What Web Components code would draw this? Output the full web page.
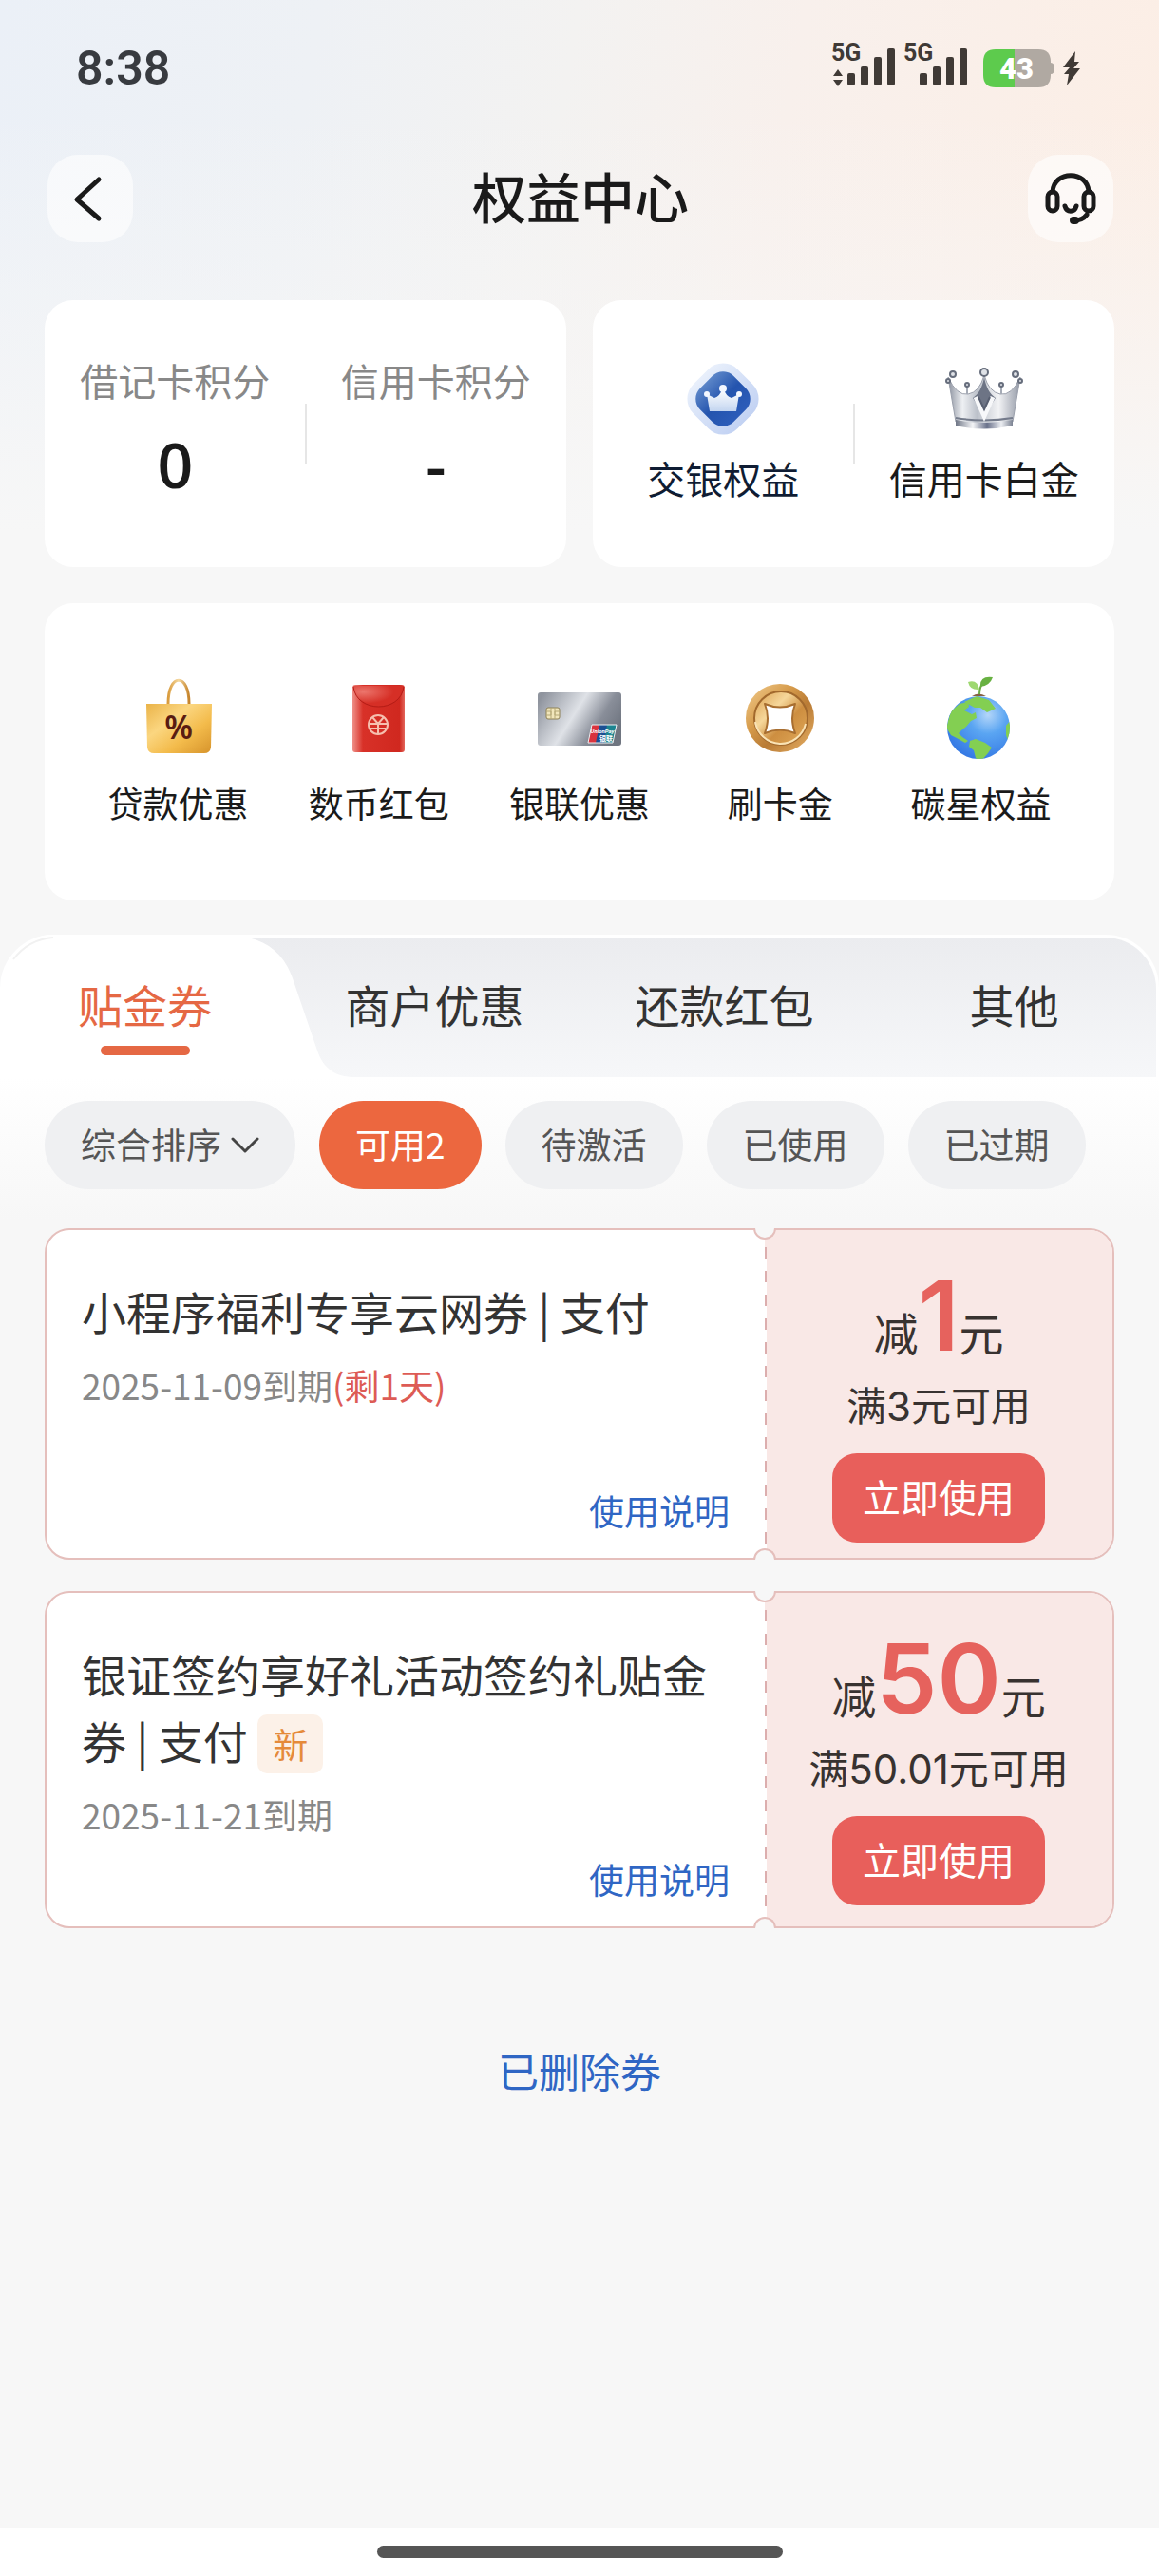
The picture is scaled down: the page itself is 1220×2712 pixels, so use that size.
<!DOCTYPE html>
<html lang="zh-CN">
<head>
<meta charset="utf-8">
<meta name="viewport" content="width=device-width, initial-scale=1">
<title>权益中心</title>
<style>
	html {
		background:#f7f7f7;
	}
	body {
		margin:0;
		font-family:"Noto Sans CJK SC", "Noto Sans", sans-serif;
		color:#1a1a1a;
	}
</style>
</head>
<body>
<rc-page>
	<rc-status-bar slot="top" time="8:38" battery="43"></rc-status-bar>
	<rc-header slot="top">权益中心</rc-header>

	<rc-card>
		<rc-stat label="借记卡积分">0</rc-stat>
		<rc-stat label="信用卡积分">-</rc-stat>
	</rc-card>
	<rc-card>
		<rc-entry icon="diamond" size="large" style="--rc-entry-color:#0f1c33">交银权益</rc-entry>
		<rc-entry icon="crown" size="large">信用卡白金</rc-entry>
	</rc-card>
	<rc-card wide>
		<rc-entry icon="bag">贷款优惠</rc-entry>
		<rc-entry icon="envelope">数币红包</rc-entry>
		<rc-entry icon="card">银联优惠</rc-entry>
		<rc-entry icon="coin">刷卡金</rc-entry>
		<rc-entry icon="globe">碳星权益</rc-entry>
	</rc-card>

	<rc-panel slot="panel">
		<rc-tab slot="tabs" active>贴金券</rc-tab>
		<rc-tab slot="tabs">商户优惠</rc-tab>
		<rc-tab slot="tabs">还款红包</rc-tab>
		<rc-tab slot="tabs">其他</rc-tab>

		<rc-sort slot="filters" label="综合排序"></rc-sort>
		<rc-chip slot="filters" active>可用2</rc-chip>
		<rc-chip slot="filters">待激活</rc-chip>
		<rc-chip slot="filters">已使用</rc-chip>
		<rc-chip slot="filters">已过期</rc-chip>

		<rc-coupon amount="1" condition="满3元可用">
			小程序福利专享云网券 | 支付
			<span slot="date">2025-11-09到期</span>
			<span slot="left">(剩1天)</span>
		</rc-coupon>
		<rc-coupon amount="50" condition="满50.01元可用" tag="新">
			银证签约享好礼活动签约礼贴金券 | 支付
			<span slot="date">2025-11-21到期</span>
		</rc-coupon>

		<rc-link slot="footer">已删除券</rc-link>
	</rc-panel>
</rc-page>

<script>
const icons = {
	back: {
		box: '0 0 90 92',
		svg: `<path d="M54 26 31 47 54 67" fill="none" stroke="#1a1a1a" stroke-width="5" stroke-linecap="round" stroke-linejoin="round"/>`
	},
	service: {
		box: '0 0 90 92',
		svg: `<g fill="none" stroke="#1a1a1a" stroke-width="5" stroke-linecap="round">
			<path d="M26 39C27 16 63 16 64 39"/>
			<rect x="21" y="39" width="10" height="20" rx="5"/>
			<rect x="59" y="39" width="10" height="20" rx="5"/>
			<path d="M39 54C41 61 49 61 51 54"/>
			<path d="M62 63C59 67 55 69 49 69"/>
			<path d="M48 69h2" stroke-width="8"/>
		</g>`
	},
	diamond: {
		box: '0 0 76 76',
		svg: `<defs>
			<linearGradient id="a"><stop offset="0" stop-color="#e8effb"/><stop offset="1" stop-color="#c2d2f3"/></linearGradient>
			<linearGradient id="b" x1="0" y1=".5" x2="1" y2=".5"><stop offset="0" stop-color="#5c86c8"/><stop offset=".5" stop-color="#2454ae"/><stop offset="1" stop-color="#2c5cb9"/></linearGradient>
			<linearGradient id="c" x1="0" y1="0" x2="0" y2="1"><stop offset="0" stop-color="#fff"/><stop offset="1" stop-color="#c3d5f0"/></linearGradient>
		</defs>
		<rect x="5" y="5" width="66" height="66" rx="22" transform="rotate(45 38 38)" fill="url(#a)"/>
		<rect x="13" y="13" width="50" height="50" rx="16" transform="rotate(45 38 38)" fill="url(#b)"/>
		<path d="M24 51 21 33 29 37Q35 35 37 28H39Q41 35 47 37L55 33 52 51Z" fill="url(#c)"/>
		<g fill="#f3f7ff"><circle cx="38" cy="27" r="4"/><circle cx="21" cy="33" r="3"/><circle cx="55" cy="33" r="3"/></g>`
	},
	crown: {
		box: '0 0 84 76',
		svg: `<defs>
			<linearGradient id="a"><stop offset="0" stop-color="#8b919e"/><stop offset=".2" stop-color="#eef0f3"/><stop offset=".4" stop-color="#bcc1ca"/><stop offset=".7" stop-color="#f2f3f5"/><stop offset="1" stop-color="#9399a6"/></linearGradient>
			<linearGradient id="b"><stop offset="0" stop-color="#6f7686"/><stop offset=".3" stop-color="#f4f5f7"/><stop offset=".55" stop-color="#69718a"/><stop offset=".8" stop-color="#eceef2"/><stop offset="1" stop-color="#7b8292"/></linearGradient>
		</defs>
		<path d="M12 62 4 15Q13 35 25 33 37 31 42 13 47 31 59 33 71 35 80 15L72 62Q42 69 12 62Z" fill="url(#a)" stroke="#9a9fab"/>
		<path d="M12 60Q42 66 72 60V66Q42 73 12 66Z" fill="url(#b)"/>
		<path d="M12 58Q42 63 72 58" fill="none" stroke="#747b8b" stroke-width="2"/>
		<path d="M42 15C40 26 36 33 30 37L42 56 54 37C48 33 44 26 42 15Z" fill="#6d7485"/>
		<path d="M33 36 42 56 51 36" fill="none" stroke="#f7f8fa" stroke-width="5"/>
		<path d="M36 36 42 49 48 36" fill="none" stroke="#575e70" stroke-width="2"/>
		<path d="M24 24v9M60 24v9" stroke="#a5abb6" stroke-width="2"/>
		<g fill="#dfe2e7" stroke="#666d7c" stroke-width="2"><circle cx="42" cy="10" r="4"/><circle cx="9" cy="12" r="3"/><circle cx="75" cy="12" r="3"/><circle cx="4" cy="19" r="2"/><circle cx="80" cy="19" r="2"/><circle cx="24" cy="23" r="2"/><circle cx="60" cy="23" r="2"/></g>`
	},
	bag: {
		box: '0 0 88 88',
		svg: `<defs>
			<linearGradient id="a" x1="0" y1="0" x2="1" y2="1"><stop offset="0" stop-color="#eab348"/><stop offset=".35" stop-color="#fbd680"/><stop offset=".65" stop-color="#f3bb4b"/><stop offset="1" stop-color="#d6932b"/></linearGradient>
			<linearGradient id="b"><stop offset="0" stop-color="#d99b3c"/><stop offset=".5" stop-color="#f5d9a0"/><stop offset="1" stop-color="#c5832a"/></linearGradient>
		</defs>
		<path d="M33 29C33-4 55-4 55 29" fill="none" stroke="url(#b)" stroke-width="3"/>
		<path d="M10 29H79L78 75Q77 81 71 81H18Q12 81 11 75Z" fill="url(#a)"/>
		<text x="44" y="66" font-family="Noto Sans, sans-serif" font-size="34" font-weight="600" text-anchor="middle" fill="#5a1c12">%</text>`
	},
	envelope: {
		box: '0 0 88 88',
		svg: `<defs>
			<linearGradient id="a"><stop offset="0" stop-color="#ef9088"/><stop offset=".2" stop-color="#d83128"/><stop offset=".9" stop-color="#d0281f"/><stop offset="1" stop-color="#e3665c"/></linearGradient>
			<radialGradient id="b" cx=".2" cy=".3" r=".6"><stop offset="0" stop-color="#ec766d"/><stop offset="1" stop-color="#d62f26"/></radialGradient>
		</defs>
		<rect x="16" y="9" width="55" height="71" rx="3" fill="url(#a)"/>
		<path d="M17 10H70C69 38 20 38 17 10Z" fill="url(#b)"/>
		<path d="M17 11C20 39 67 39 70 11" fill="none" stroke="#b41c16"/>
		<g fill="none" stroke="#f6bfae" stroke-width="2"><circle cx="43" cy="51" r="10"/><path d="M37 43 43 50 49 43M43 50V60M34 50H52M35 55H51"/></g>`
	},
	card: {
		box: '0 0 88 88',
		svg: `<defs>
			<linearGradient id="a" x1="0" y1=".2" x2="1" y2=".6"><stop offset="0" stop-color="#8f949e"/><stop offset=".45" stop-color="#dfe2e7"/><stop offset=".75" stop-color="#898e99"/><stop offset="1" stop-color="#6f7580"/></linearGradient>
		</defs>
		<rect y="17" width="88" height="56" rx="3" fill="url(#a)"/>
		<rect x="9" y="33" width="14" height="12" rx="2" fill="#f1e6bb" stroke="#8d8055"/>
		<path d="M9 37h5v4H9M23 37h-5v4h5M14 33v12M18 33v12" fill="none" stroke="#b5a877"/>
		<path d="M57 51H67L63 70H53Z" fill="#d9333d"/>
		<path d="M65 51H75L71 70H61Z" fill="#1b4f93"/>
		<path d="M73 51H83L79 70H70Z" fill="#1d8490"/>
		<path d="M57 51H83L79 70H53Z" fill="none" stroke="#eef1f4"/>
		<text x="68" y="60" font-family="Roboto, sans-serif" font-size="6" font-weight="700" font-style="italic" text-anchor="middle" fill="#fff">UnionPay</text>
		<text x="72" y="68" font-family="Noto Sans CJK SC, sans-serif" font-size="7" font-weight="700" text-anchor="middle" fill="#fff">银联</text>`
	},
	coin: {
		box: '0 0 88 88',
		svg: `<defs>
			<linearGradient id="a" x1="0" y1="0" x2="1" y2="1"><stop offset="0" stop-color="#f2cf92"/><stop offset=".35" stop-color="#d79c4c"/><stop offset=".6" stop-color="#b97b35"/><stop offset="1" stop-color="#eab469"/></linearGradient>
			<linearGradient id="b" x1="0" y1="0" x2="1" y2="1"><stop offset="0" stop-color="#d99c4b"/><stop offset=".35" stop-color="#f6d79a"/><stop offset=".6" stop-color="#cd8e40"/><stop offset="1" stop-color="#e2aa5b"/></linearGradient>
		</defs>
		<circle cx="44" cy="44" r="36" fill="url(#a)"/>
		<circle cx="45" cy="44" r="28" fill="url(#b)" stroke="#a2692d" stroke-width="2"/>
		<path d="M18 48A27 27 0 0 0 71 50" fill="none" stroke="#fae3b5" stroke-width="2"/>
		<path d="M28 29Q44 36 60 29 54 44 60 60 44 53 28 60 34 44 28 29Z" fill="#fff" stroke="#a86e30" stroke-width="2" stroke-linejoin="round"/>`
	},
	globe: {
		box: '0 0 88 88',
		svg: `<defs>
			<radialGradient id="a" cx=".65" cy=".3" r=".75"><stop offset="0" stop-color="#b4d6f9"/><stop offset=".4" stop-color="#5aa5f2"/><stop offset="1" stop-color="#3478e4"/></radialGradient>
			<clipPath id="c"><circle cx="42" cy="54" r="33"/></clipPath>
		</defs>
		<circle cx="42" cy="54" r="33" fill="url(#a)"/>
		<g clip-path="url(#c)" fill="#83cf52">
			<path d="M8 54 13 37 22 29 31 27 32 32 27 36 35 40 39 38 40 44 34 47 29 53 24 57 21 60 25 64 31 68 28 70 19 65 13 62Z"/>
			<path d="M33 68 39 66 49 70 56 75 52 81 44 90 39 86 37 78 32 74Z"/>
			<path d="M27 27 40 21 53 25 60 34 51 38 44 33 38 33Z"/>
			<path d="M76 46 71 52 71 62 75 72Z"/>
		</g>
		<path d="M35 21Q42 16 50 21Z" fill="#876044"/>
		<path d="M43 19Q43 11 47 7" fill="none" stroke="#6cab45" stroke-width="2"/>
		<path d="M44 11Q43-1 57 1 54 10 44 11Z" fill="#68b142"/>
		<path d="M43 14Q33 15 31 6 41 3 43 14Z" fill="#9ed870"/>`
	}
};

const drawIcon = name => `<svg viewBox="${icons[name].box}" aria-hidden="true">${icons[name].svg}</svg>`;

// base element, attaches the markup returned by the template getter
class RcElement extends HTMLElement {
	connectedCallback() {
		const template = document.createElement('template');
		template.innerHTML = this.template;
		this.attachShadow({mode: 'open'}).appendChild(template.content.cloneNode(true));
	}
}

customElements.define('rc-page', class extends RcElement {
	get template() {
		return `
		<style>
		:host {
			display:flex;
			flex-direction:column;
			min-height:100vh;
			background:
				linear-gradient(180deg, rgba(247,247,247,0) 120px, #f7f7f7 560px),
				linear-gradient(100deg, #ebf0f7 0%, #eef1f5 20%, #f3f2f1 36%, #f8f0ec 50%, #fceee5 75%, #fdece1 100%);
		}
		main {
			flex:1;
		}
		section {
			display:grid;
			grid-template-columns:1fr 1fr;
			gap:38px 28px;
			padding:61px 47px 36px;
		}
		footer {
			display:flex;
			justify-content:center;
			padding:19px 0;
			background:#fff;
		}
		footer i {
			width:35%;
			height:13px;
			border-radius:7px;
			background:#555;
		}
		</style>
		<slot name="top"></slot>
		<main>
			<section><slot></slot></section>
			<slot name="panel"></slot>
		</main>
		<footer><i></i></footer>`;
	}
});

customElements.define('rc-status-bar', class extends RcElement {
	get template() {
		const bars = `
			<rect x="17" y="31" width="8" height="13" rx="2"/>
			<rect x="31" y="24" width="8" height="20" rx="2"/>
			<rect x="45" y="14" width="8" height="30" rx="2"/>
			<rect x="59" y="5" width="8" height="39" rx="2"/>
			<text x="0" y="18" font-size="25" font-weight="700">5G</text>`;
		return `
		<style>
		:host {
			display:flex;
			align-items:center;
			height:144px;
			padding:0 83px 0 80px;
			font-family:Roboto, sans-serif;
			color:#383b40;
		}
		time {
			flex:1;
			font-size:50px;
			font-weight:600;
			line-height:60px;
		}
		div {
			display:flex;
			align-items:center;
			gap:8px;
		}
		svg {
			display:block;
			fill:#403a36;
		}
		.battery {
			margin-left:8px;
		}
		</style>
		<time>${this.getAttribute('time')}</time>
		<div>
			<svg width="68" height="68" viewBox="0 -8 68 68">${bars}<path d="M7 27 12 34H2ZM7 45 12 38H2Z"/></svg>
			<svg width="68" height="68" viewBox="0 -8 68 68">${bars}</svg>
			<svg class="battery" width="76" height="40" viewBox="0 0 76 40">
				<path d="M33 0H58Q71 0 71 13V27Q71 40 58 40H33Z" fill="#b0a9a2"/>
				<path d="M33 0H13Q0 0 0 13V27Q0 40 13 40H33Z" fill="#5dcb4d"/>
				<path d="M71 14Q75 14 75 20T71 26Z" fill="#b0a9a2"/>
				<text x="35" y="31" font-size="31" font-weight="900" text-anchor="middle" fill="#fff">${this.getAttribute('battery')}</text>
			</svg>
			<svg width="18" height="38" viewBox="0 0 18 38"><path d="M13 1 0 18H7L1 25H6L4 37 18 19H11L17 12H12Z"/></svg>
		</div>`;
	}
});

customElements.define('rc-header', class extends RcElement {
	get template() {
		return `
		<style>
		:host {
			display:grid;
			grid-template-columns:90px 1fr 90px;
			align-items:center;
			padding:19px 48px 0 50px;
		}
		h1 {
			margin:0;
			padding-bottom:8px;
			font-size:57px;
			font-weight:500;
			line-height:84px;
			text-align:center;
		}
		button {
			height:92px;
			padding:0;
			border:0;
			border-radius:32px;
			background:rgba(255,255,255,.6);
		}
		svg {
			display:block;
		}
		</style>
		<button aria-label="返回">${drawIcon('back')}</button>
		<h1><slot></slot></h1>
		<button aria-label="客服">${drawIcon('service')}</button>`;
	}
});

customElements.define('rc-card', class extends RcElement {
	get template() {
		return `
		<style>
		:host {
			display:grid;
			grid-auto-flow:column;
			grid-auto-columns:minmax(0, 1fr);
			border-radius:30px;
			background:#fff;
		}
		:host([wide]) {
			grid-column:1 / -1;
			padding:0 35px;
		}
		/* one divider in the middle, laid over both cells */
		:host(:not([wide]))::after {
			content:'';
			grid-area:1 / 1 / 2 / 3;
			place-self:center;
			width:2px;
			height:63px;
			background:#e6e6e6;
		}
		:host(:not([wide])) ::slotted(:first-child) {
			grid-area:1 / 1;
		}
		:host(:not([wide])) ::slotted(:last-child) {
			grid-area:1 / 2;
		}
		</style>
		<slot></slot>`;
	}
});

customElements.define('rc-stat', class extends RcElement {
	get template() {
		return `
		<style>
		:host {
			display:flex;
			flex-direction:column;
			align-items:center;
			gap:20px;
			padding:56px 0 69px;
		}
		span {
			font-size:40px;
			line-height:56px;
			color:#888;
		}
		strong {
			font-family:"Open Sans", sans-serif;
			font-size:66px;
			font-weight:600;
			line-height:80px;
		}
		</style>
		<span>${this.getAttribute('label')}</span>
		<strong><slot></slot></strong>`;
	}
});

customElements.define('rc-entry', class extends RcElement {
	get template() {
		return `
		<style>
		:host {
			display:block;
		}
		a {
			display:flex;
			flex-direction:column;
			align-items:center;
			gap:19px;
			padding:77px 0;
			font-size:37px;
			line-height:52px;
			white-space:nowrap;
			text-decoration:none;
			color:var(--rc-entry-color, #1a1a1a);
		}
		svg {
			display:block;
			height:88px;
		}
		:host([size=large]) a {
			gap:17px;
			padding:66px 0;
			font-size:40px;
			line-height:56px;
		}
		:host([size=large]) svg {
			height:76px;
		}
		</style>
		<a href="#">${drawIcon(this.getAttribute('icon'))}<slot></slot></a>`;
	}
});

customElements.define('rc-panel', class extends RcElement {
	get template() {
		return `
		<style>
		:host {
			display:block;
			overflow:hidden;
			border-radius:56px 56px 0 0;
			background:linear-gradient(180deg, #fff 150px, #f7f7f7 300px);
		}
		.head {
			display:grid;
		}
		.head > * {
			grid-area:1 / 1;
		}
		.strip {
			margin:3px 3px 0 0;
			border-radius:0 54px 0 0;
			background:linear-gradient(180deg, #ebecef, #f6f7f9);
		}
		.shape {
			display:block;
			width:376px;
			height:150px;
		}
		.tabs {
			display:grid;
			grid-template-columns:repeat(4, 1fr);
		}
		.filters {
			display:flex;
			gap:25px;
			padding:25px 47px 41px;
		}
		.coupons {
			display:flex;
			flex-direction:column;
			gap:33px;
			padding:0 47px;
		}
		</style>
		<div class="head">
			<div class="strip"></div>
			<svg class="shape" viewBox="0 0 376 150" aria-hidden="true">
				<path d="M0 0H240C275 2 297 15 308 46L334 122C340 140 352 150 374 150H0Z" fill="#fff"/>
				<path d="M14 26Q30 5 56 3" fill="none" stroke="#f1f1f1" stroke-width="2"/>
			</svg>
			<div class="tabs" role="tablist"><slot name="tabs"></slot></div>
		</div>
		<div class="filters"><slot name="filters"></slot></div>
		<div class="coupons"><slot></slot></div>
		<slot name="footer"></slot>`;
	}
});

customElements.define('rc-tab', class extends RcElement {
	get template() {
		return `
		<style>
		:host {
			display:grid;
		}
		button {
			display:flex;
			flex-direction:column;
			align-items:center;
			gap:14px;
			padding:43px 0 23px;
			border:0;
			background:none;
			font:inherit;
			font-size:47px;
			line-height:60px;
			color:#333;
		}
		i {
			width:94px;
			height:10px;
			border-radius:5px;
		}
		:host([active]) button {
			color:#e56844;
		}
		:host([active]) i {
			background:#e56844;
		}
		</style>
		<button role="tab" aria-selected="${this.hasAttribute('active')}"><slot></slot><i></i></button>`;
	}
});

customElements.define('rc-chip', class extends RcElement {
	get template() {
		return `
		<style>
		:host {
			display:block;
		}
		button {
			height:93px;
			padding:0 38px 4px;
			border:0;
			border-radius:47px;
			background:#eff0f2;
			font:inherit;
			font-size:37px;
			white-space:nowrap;
			color:#555;
		}
		:host([active]) button {
			background:#ec673f;
			color:#fff;
		}
		</style>
		<button><slot></slot></button>`;
	}
});

customElements.define('rc-sort', class extends RcElement {
	get template() {
		return `
		<style>
		:host {
			display:grid;
			align-items:center;
			justify-items:end;
			height:93px;
			border-radius:47px;
			background:#eff0f2;
		}
		select, svg {
			grid-area:1 / 1;
		}
		select {
			appearance:none;
			height:93px;
			padding:0 78px 4px 38px;
			border:0;
			background:none;
			font:inherit;
			font-size:37px;
			color:#555;
		}
		svg {
			margin-right:38px;
			pointer-events:none;
		}
		</style>
		<select aria-label="排序"><option>${this.getAttribute('label')}</option></select>
		<svg width="30" height="18" viewBox="0 0 30 18" aria-hidden="true"><path d="M2 2 15 15 28 2" fill="none" stroke="#444" stroke-width="3" stroke-linecap="round" stroke-linejoin="round"/></svg>`;
	}
});

customElements.define('rc-coupon', class extends RcElement {
	get template() {
		const tag = this.getAttribute('tag');
		return `
		<style>
		:host {
			display:flex;
			box-sizing:border-box;
			min-height:349px;
			border:2px solid #e5bfbc;
			border-radius:26px;
			background:#fff;
		}
		.info {
			flex:1;
			display:flex;
			flex-direction:column;
			padding:50px 37px 22px;
		}
		h2 {
			margin:0 0 15px;
			font-size:47px;
			font-weight:400;
			line-height:70px;
			color:#333;
		}
		mark {
			display:inline-block;
			padding:0 16px;
			border-radius:10px;
			background:#fcf1e8;
			font-size:37px;
			line-height:62px;
			color:#e58a3a;
		}
		p {
			margin:0 0 12px;
			font-size:37px;
			line-height:56px;
			color:#888;
		}
		.left {
			color:#dd5b55;
		}
		a {
			align-self:flex-end;
			margin-top:auto;
			font-size:37px;
			line-height:56px;
			text-decoration:none;
			color:#2f66c4;
		}
		.use {
			position:relative;
			display:flex;
			flex-direction:column;
			align-items:center;
			width:366px;
			padding-top:28px;
			border-radius:0 24px 24px 0;
			background:
				repeating-linear-gradient(180deg, #dcaeae 0 12px, #fff 12px 25px) 0 18px / 2px 100% no-repeat,
				#f9e8e6;
			color:#383230;
		}
		.use::before, .use::after {
			content:'';
			position:absolute;
			left:-12px;
			box-sizing:border-box;
			width:24px;
			height:12px;
			border:2px solid #e5bfbc;
			background:#f7f7f7;
		}
		.use::before {
			top:-2px;
			border-top:0;
			border-radius:0 0 12px 12px;
		}
		.use::after {
			bottom:-2px;
			border-bottom:0;
			border-radius:12px 12px 0 0;
		}
		.amount {
			display:flex;
			align-items:baseline;
			height:128px;
			font-size:47px;
			line-height:124px;
		}
		.amount b {
			font-family:Inter, sans-serif;
			font-size:102px;
			font-weight:600;
			color:#e6625d;
		}
		.condition {
			margin-bottom:19px;
			font-family:Inter, "Noto Sans CJK SC", sans-serif;
			font-size:42px;
			line-height:60px;
		}
		button {
			height:94px;
			padding:0 32px 4px;
			border:0;
			border-radius:26px;
			background:#e85f5b;
			font:inherit;
			font-size:40px;
			color:#fff;
		}
		</style>
		<div class="info">
			<h2><slot></slot>${tag ? `<mark>${tag}</mark>` : ''}</h2>
			<p><slot name="date"></slot><span class="left"><slot name="left"></slot></span></p>
			<a href="#">使用说明</a>
		</div>
		<div class="use">
			<div class="amount">减<b>${this.getAttribute('amount')}</b>元</div>
			<div class="condition">${this.getAttribute('condition')}</div>
			<button>立即使用</button>
		</div>`;
	}
});

customElements.define('rc-link', class extends RcElement {
	get template() {
		return `
		<style>
		:host {
			display:flex;
			justify-content:center;
			padding:119px 0;
		}
		a {
			font-size:43px;
			line-height:60px;
			text-decoration:none;
			color:#2f66c4;
		}
		</style>
		<a href="#"><slot></slot></a>`;
	}
});
</script>
</body>
</html>
